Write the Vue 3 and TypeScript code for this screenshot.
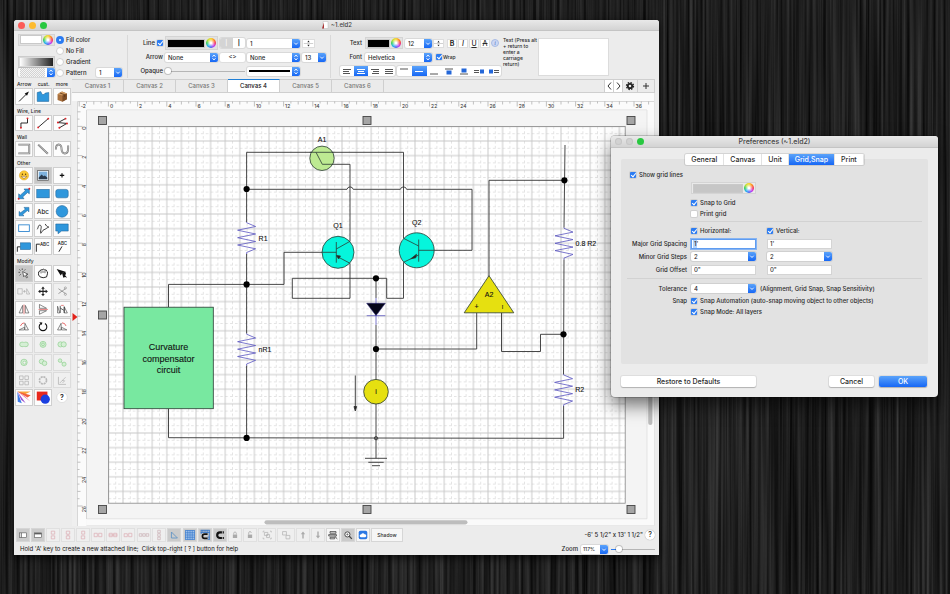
<script setup lang="ts">
import { ref } from 'vue'

interface Tool {
  name: string
  icon: string
  state?: 'on' | 'off' | 'wide'
}
interface Section {
  label: string[]
  kind: string
  tools: Tool[]
}

const BLUE = 'fill="#2f97dc" stroke="#1a5f94" stroke-width=".6"'
const dot = (x: number, y: number) => `<circle cx="${x}" cy="${y}" r="1.1" fill="#e0262b"/>`
const ink = 'fill="none" stroke="#111" stroke-width="1"'
const thin = 'fill="none" stroke="#444" stroke-width=".7"'
const pale = 'fill="none" stroke="#b0b0b0" stroke-width=".8"'
const green = 'fill="#d5efd5" stroke="#93cf93" stroke-width=".8"'
const wall = (d: string) =>
  `<path d="${d}" fill="none" stroke="#777" stroke-width="2.2"/><path d="${d}" fill="none" stroke="#d0d0d0" stroke-width=".9"/>`

const sections: Section[] = [
  {
    label: ['Arrow', 'cust.', 'more'],
    kind: 'first',
    tools: [
      { name: 'Arrow', icon: `<path d="M3.500 13.500 12 5" ${ink}/><path d="M14.500 2.500 9.800 4.600 12.400 7.200z" fill="#111"/>` },
      { name: 'Custom shape', icon: `<path d="M2.500 3.500 6.500 2.500Q8.500 8.500 11.500 4.200L15.500 3.500V13.500H2.500z" ${BLUE}/>` },
      { name: 'More shapes', icon: '<path d="M4 5.500 9 2.500 14.500 4.500V11L9.500 14 4 12z" fill="#a9703d"/><path d="M4 5.500 9 2.500 14.500 4.500 9.500 7z" fill="#d09a62"/><path d="M9.500 7 14.500 4.500V11L9.500 14z" fill="#7c4c26"/><path d="M6.500 4 12 6V8.500" fill="none" stroke="#5c3517" stroke-width=".9"/>' }
    ]
  },
  {
    label: ['Wire, Line'],
    kind: 'single',
    tools: [
      { name: 'Wire', icon: `<path d="M5.500 13.500V8H13V3" ${ink}/>${dot(5.5, 13.5)}${dot(13, 2.7)}` },
      { name: 'Line', icon: `<path d="M3.500 13 15 3" ${ink}/>${dot(3.5, 13)}${dot(15, 3)}` },
      { name: 'Polyline', icon: `<path d="M13 3 4.500 7.500 14.500 8.500 6 13.500" ${ink}/>${dot(13, 3)}${dot(4.3, 7.5)}${dot(14.7, 8.5)}${dot(6, 13.4)}` }
    ]
  },
  {
    label: ['Wall'],
    kind: 'single',
    tools: [
      { name: 'Wall', icon: wall('M2.500 3H15V13H2.500') },
      { name: 'Straight wall', icon: wall('M3.500 3 14.500 13.500') },
      { name: 'Curved wall', icon: wall('M2 8.500C2 1 8.500 1 8.500 8S16 15 16 7.500V4') }
    ]
  },
  {
    label: ['Other'],
    kind: 'other',
    tools: [
      { name: 'Emoji', icon: '<circle cx="9" cy="8" r="5.200" fill="#fbc934" stroke="#d99a1c" stroke-width=".5"/><circle cx="7.200" cy="6.800" r=".8" fill="#5a3a0a"/><circle cx="10.800" cy="6.800" r=".8" fill="#5a3a0a"/><path d="M5.800 9Q9 13.500 12.200 9z" fill="#fff" stroke="#7a4c10" stroke-width=".6"/>' },
      { name: 'Picture', state: 'on', icon: '<rect x="3" y="2.500" width="12" height="11" fill="#fff" stroke="#555" stroke-width=".8"/><rect x="4.200" y="3.700" width="9.600" height="8.600" fill="#7db1dd"/><path d="M4.200 10.500 7.500 7 9.500 9 11 8 13.800 10.500V12.300H4.200z" fill="#2a3a4c"/>' },
      { name: 'Point', icon: '<path d="M9 5.500V10.500M6.500 8H11.500" stroke="#111" stroke-width="1.300"/>' },
      { name: 'Two-point block arrow', icon: `<path d="M3 14V8.500L4.800 10 10.500 5 9 3H15V8.500L13 7 7.500 12 9 14z" ${BLUE}/>${dot(3, 14)}${dot(15, 2.7)}` },
      { name: 'Rectangle', icon: `<rect x="2" y="3.500" width="14" height="9.500" ${BLUE}/>` },
      { name: 'Rounded rectangle', icon: `<rect x="2" y="3.500" width="14" height="9.500" rx="2.500" ${BLUE}/>` },
      { name: 'Block arrow', icon: `<path d="M3.500 13V8L5.200 9.500 10.500 5.500 9 3.500H14.500V8.500L12.800 7 7.500 11.500 9 13z" ${BLUE}/>` },
      { name: 'Text', icon: '<text x="9" y="10.500" font-size="7" text-anchor="middle" fill="#222" font-family="Inter, sans-serif">Abc</text>' },
      { name: 'Circle', icon: `<circle cx="9" cy="8" r="6.600" ${BLUE}/>` },
      { name: 'Frame', icon: '<rect x="3" y="4" width="12" height="7.500" fill="#fff" stroke="#2f86cf" stroke-width="1"/>' },
      { name: 'Freehand', icon: '<path d="M2.500 9C4 7 3.500 3.500 6 4.500S5.500 10 6.500 13.500C8 12 8.500 10 10 9.500 12 9 13 7.500 15.500 6.500 13.500 6 12.500 5 11.500 3" fill="none" stroke="#111" stroke-width=".9"/>' },
      { name: 'Speech bubble', icon: `<path d="M2 3H16V11H8.500L4.500 14V11H2z" ${BLUE}/>` },
      { name: 'Callout', icon: `<path d="M1.500 14V8.500H5" ${ink}/><rect x="5" y="4" width="11.500" height="7.500" ${BLUE}/>` },
      { name: 'Text callout', icon: `<path d="M1.500 14V5.500H5.500" ${ink}/><text x="5.500" y="7" font-size="5" fill="#111" font-family="Inter, sans-serif">ABC</text>` },
      { name: 'Slanted text callout', icon: `<path d="M5.500 14 9 8" ${ink}/><text x="9.500" y="6" font-size="5" text-anchor="middle" fill="#111" font-family="Inter, sans-serif">ABC</text>` }
    ]
  },
  {
    label: ['Modify'],
    kind: 'modify',
    tools: [
      { name: 'Select', state: 'on', icon: '<path d="M7.500 6 13.500 9 11.300 9.700 13 12.500 11.800 13 10.200 10.300 8.700 11.800z" fill="#fff" stroke="#222" stroke-width=".7"/><path d="M7 2.500V4.200M3.800 3.500 5 4.800M10.500 3.500 9.300 4.800M2.800 6.800H4.600M4 10.300 5.300 9" stroke="#222" stroke-width=".8"/>' },
      { name: 'Pan', icon: '<path d="M4 8.500Q3.500 5.500 5.500 5.500 6 3.500 8 4 10 2.500 11 4.200 13 3.500 13 5.500 14.500 5.500 14 8.500L13 12Q9 13.800 5.800 12L4 9.800z" fill="#fff" stroke="#111" stroke-width="1"/><path d="M6.800 5.500V8M9 5V7.500M11.200 5.300V7.800" stroke="#111" stroke-width=".7"/>' },
      { name: 'Direct select', icon: '<path d="M3 3 12 6 9.500 7.500 7.500 10.500z" fill="#111"/><path d="M9 7.500 12.500 5.500 13.500 8.500 12.500 10 14.800 13 12.500 12 10.500 12.800z" fill="#111"/>' },
      { name: 'Replace', state: 'off', icon: `<path d="M2 5H7V11H2zM12 11V5L15.500 11z" ${pale}/><path d="M8 8H11M9.500 6.500V9.500" ${pale}/>` },
      { name: 'Move', icon: '<path d="M9 2.500 11 5H9.600V7.400H12V6L14.500 8 12 10V8.600H9.600V11H11L9 13.500 7 11H8.400V8.600H6V10L3.500 8 6 6V7.400H8.400V5H7z" fill="#222"/>' },
      { name: 'Cut', state: 'off', icon: '<path d="M5 5 13 10.500M5 10.500 13 5" stroke="#8c8c8c" stroke-width=".9"/><circle cx="12.800" cy="4.200" r="1.200" fill="none" stroke="#8c8c8c" stroke-width=".7"/><circle cx="12.800" cy="11.300" r="1.200" fill="none" stroke="#8c8c8c" stroke-width=".7"/>' },
      { name: 'Flip horizontal', icon: `<path d="M7.500 3.500V12H3.500zM10.500 3.500V12H14.500z" ${thin}/><path d="M9 2.500V13.500" stroke="#d55" stroke-width=".8"/>` },
      { name: 'Flip vertical', icon: `<path d="M5 2.500V6.800H13zM5 13.500V9.500H13z" ${thin}/><path d="M4 8.100H14.500" stroke="#d55" stroke-width=".8"/>` },
      { name: 'Mirror to', icon: `<path d="M6.500 12H4V4.500zM11.500 12H15L11.500 5z" ${thin}/><path d="M7 4V12M11.500 5V12M7 6.500 11 9" stroke="#222" stroke-width=".8"/><path d="M8 3.500H11" stroke="#d55" stroke-width=".8"/>` },
      { name: 'Rotate left', icon: `<path d="M3.500 12H9.500V9zM10 12V4.500L14 12z" ${thin}/><path d="M5 7.500Q6.500 4 9.500 4" fill="none" stroke="#d33" stroke-width=".8"/>` },
      { name: 'Rotate', icon: '<path d="M6.800 4.800A4.300 4.300 0 1 0 11.200 4.800" fill="none" stroke="#111" stroke-width="1.200"/><path d="M4.800 3.300 8.300 3.500 7.500 6.500z" fill="#111"/>' },
      { name: 'Rotate right', icon: `<path d="M14.500 12H8.500V9zM8 12V4.500L4 12z" ${thin}/><path d="M9 4Q12.500 4 13.500 7.500" fill="none" stroke="#d33" stroke-width=".8"/>` },
      { name: 'Union', state: 'off', icon: `<path d="M6.800 5.400A2.600 2.600 0 1 0 6.800 10.600Q9 10.600 9 9.800 9 10.600 11.200 10.600A2.600 2.600 0 1 0 11.200 5.400Q9 5.400 9 6.200 9 5.400 6.800 5.400z" ${green}/>` },
      { name: 'Intersect', state: 'off', icon: `<circle cx="9" cy="8" r="3.400" ${green}/><circle cx="9" cy="8" r="1.600" ${green}/>` },
      { name: 'Combine', state: 'off', icon: `<circle cx="7.300" cy="8" r="2.900" ${green}/><circle cx="10.900" cy="8" r="2.900" ${green}/>` },
      { name: 'Subtract', state: 'off', icon: `<circle cx="9" cy="8" r="3.600" ${green}/><circle cx="9.500" cy="8.300" r="1.700" fill="#f3f3f3" stroke="#93cf93" stroke-width=".7"/>` },
      { name: 'Exclude', state: 'off', icon: `<circle cx="7.400" cy="7" r="2.600" ${green}/><circle cx="10.700" cy="9" r="2.600" ${green}/>` },
      { name: 'Divide', state: 'off', icon: `<circle cx="6.800" cy="6" r="2" ${green}/><circle cx="11.300" cy="10" r="2.300" ${green}/><path d="M8 7.500 9.800 8.800" ${green}/>` },
      { name: 'Array', state: 'off', icon: `<path d="M4 3H8V7H4zM10 3H14V7H10zM4 9H8V13H4zM10 9H14V13H10z" ${pale}/>` },
      { name: 'Circular array', state: 'off', icon: '<circle cx="9" cy="8" r="4" fill="none" stroke="#b8b8b8" stroke-width="1.800" stroke-dasharray="2.300 .840"/>' },
      { name: 'Edit path', state: 'off', icon: `<path d="M5 4V12.500H13.500M6.500 11 13 4.500M9 8 12 8.500 9.500 11" ${pale}/>` },
      { name: 'Color burst', icon: '<path d="M1.500 1.500H16.500L9 5z" fill="#f9a53b"/><path d="M1.500 1.500 16.500 13 10 7z" fill="#e94b8b"/><path d="M1.500 1.500 11 14.500 6 11z" fill="#9b4fd0"/><path d="M1.500 1.500 6.500 14.500 2 13z" fill="#3d7be8"/><path d="M1.500 1.500 16.500 5.500 13 8z" fill="#f2603a"/>' },
      { name: 'Overlap color', icon: '<rect x="2" y="1.500" width="12" height="10" fill="#e8281e"/><circle cx="11.500" cy="10" r="5.200" fill="#1b3fe0"/>' },
      { name: 'Help', state: 'wide', icon: '<circle cx="9" cy="8" r="5.200" fill="#fff" stroke="#ccc" stroke-width=".5"/><text x="9" y="10.600" font-size="7" font-weight="600" text-anchor="middle" fill="#222" font-family="Inter, sans-serif">?</text>' }
    ]
  }
]

const pink = 'fill="none" stroke="#dcaab2" stroke-width=".8"'
const lock = (d: string) =>
  `<rect x="4.500" y="6.500" width="5" height="4" fill="#aaa"/><path d="${d}" fill="none" stroke="#aaa" stroke-width=".9"/>`
const bottomGroups: Tool[][] = [
  [
    { name: 'Left panel', state: 'on', icon: '<rect x="3" y="4.500" width="8" height="5.500" fill="#fff" stroke="#555" stroke-width=".7"/><path d="M5 4.500V10" stroke="#555"/>' },
    { name: 'Top panel', state: 'on', icon: '<rect x="3" y="4.500" width="8" height="5.500" fill="#fff" stroke="#555" stroke-width=".7"/><path d="M3 5.500H11" stroke="#555" stroke-width="1.500"/>' }
  ],
  [
    { name: 'Align left', state: 'off', icon: `<path d="M5 2.500H9V6H5zM5 8H9V11.500H5z" ${pink}/>` },
    { name: 'Align centre', state: 'off', icon: `<path d="M5 2.500H9V6H5zM5 8H9V11.500H5zM7 6V8" ${pink}/>` },
    { name: 'Align right', state: 'off', icon: `<path d="M5.500 2.500H9V6H5.500zM5 8H9V11.500H5z" ${pink}/>` }
  ],
  [
    { name: 'Align top', state: 'off', icon: `<path d="M2.500 5H6.200V9H2.500zM7.800 5H11.500V9H7.800z" ${pink}/>` },
    { name: 'Align middle', state: 'off', icon: `<path d="M2.500 5H6.200V9H2.500zM7.800 5H11.500V9H7.800zM2 7H12" ${pink}/>` },
    { name: 'Align bottom', state: 'off', icon: `<path d="M2.500 5.500H6.200V9H2.500zM7.800 5H11.500V9H7.800z" ${pink}/>` }
  ],
  [
    { name: 'Distribute across', state: 'off', icon: `<path d="M1.500 5.500H4.500V8.500H1.500zM5.500 5.500H8.500V8.500H5.500zM9.500 5.500H12.500V8.500H9.500z" fill="none" stroke="#c9b0b4" stroke-width=".8"/>` },
    { name: 'Distribute down', state: 'off', icon: `<path d="M5.500 1.500H8.500V4.500H5.500zM5.500 5.500H8.500V8.500H5.500zM5.500 9.500H8.500V12.500H5.500z" fill="none" stroke="#c9b0b4" stroke-width=".8"/>` },
    { name: 'Angle', state: 'on', icon: '<path d="M4 3.500V10.500H11z" fill="none" stroke="#5f93c4" stroke-width="1"/>' }
  ],
  [
    { name: 'Grid', state: 'on', icon: '<rect x="1.500" y="1.500" width="11" height="11" fill="#dbeafc"/><path d="M1.500 2H12.500M1.500 4.500H12.500M1.500 7H12.500M1.500 9.500H12.500M1.500 12H12.500M2 1.500V12.500M4.500 1.500V12.500M7 1.500V12.500M9.500 1.500V12.500M12 1.500V12.500" stroke="#2f74c9" stroke-width="1"/>' },
    { name: 'Snap to grid', state: 'on', icon: '<path d="M2 1.500H12.500M2 4H12.500M12 1.500V12.500M9.500 1.500V5M7 1.500V4M4.500 1.500V4M2.500 1.500V6M10 9.500H12.500M10 12H12.500" stroke="#2f74c9" stroke-width="1"/><path d="M10 6H6.500A2.500 2.500 0 0 0 6.500 11H10" fill="none" stroke="#111" stroke-width="2"/>' },
    { name: 'Magnet', state: 'on', icon: '<path d="M11.500 4H7A3 3 0 0 0 7 10.500H11.500" fill="none" stroke="#111" stroke-width="2.600"/><path d="M9.800 2.500V5.500M9.800 9V12" stroke="#fff" stroke-width=".7"/>' }
  ],
  [
    { name: 'Lock', state: 'off', icon: lock('M5.500 6.500V5A1.500 1.500 0 0 1 8.500 5V6.500') },
    { name: 'Unlock', state: 'off', icon: lock('M5.500 6.500V4.500A1.500 1.500 0 0 1 8.500 4.500') },
    { name: 'Group', state: 'wide', icon: `<path d="M4 4H8V7.500H4zM6.500 6.500H10V10H6.500zM2.500 2.500H4M10.500 2.500H12M2.500 11.500H4M10.500 11.500H12M2.500 2.500V4M12 2.500V4M2.500 10V11.500M12 10V11.500" ${pale}/>` },
    { name: 'Ungroup', state: 'wide', icon: `<path d="M3 3H7.500V7H3zM7 7.500H11.500V11.500H7z" ${pale}/>` },
    { name: 'Bring forward', state: 'off', icon: '<path d="M7 3 9.500 6H7.800V11H6.200V6H4.500z" fill="#aaa"/>' },
    { name: 'Send backward', state: 'off', icon: '<path d="M7 11 9.500 8H7.800V3H6.200V8H4.500z" fill="#aaa"/>' },
    { name: 'Properties', icon: '<path d="M3.500 3H10.500V5H3.500zM2 6.500H11V8.200H2zM3.500 9.700H9V11.500H3.500z" fill="#ddd" stroke="#333" stroke-width=".8"/><path d="M9 8.500 12 11.500" stroke="#333"/>' }
  ],
  [{ name: 'Zoom in', state: 'on', icon: '<circle cx="6.300" cy="6.300" r="3" fill="#fff" stroke="#444" stroke-width="1.100"/><path d="M8.500 8.500 11.500 11.500" stroke="#444" stroke-width="1.500"/><path d="M5 6.300H7.600M6.300 5V7.600" stroke="#444" stroke-width=".7"/>' }],
  [{ name: 'Cloud', icon: '<rect x="2" y="2" width="10" height="10" rx="2" fill="#2b78e4"/><path d="M4.500 9.500A1.500 1.500 0 0 1 4.700 6.500 2.300 2.300 0 0 1 8.900 6 1.800 1.800 0 0 1 9.600 9.500z" fill="#fff"/>' }]
]

const fills = ['Fill color', 'No Fill', 'Gradient', 'Pattern']
const fill = ref('Fill color')
const canvases = [1, 2, 3, 4, 5, 6]
const current = ref(4)
const prefTabs = ['General', 'Canvas', 'Unit', 'Grid,Snap', 'Print']
const prefTab = ref('Grid,Snap')
const patternNo = ref('1')
const lineWidth = ref('1')
const arrowSize = ref('13')
const fontSize = ref('12')
const zoomLevel = ref('117%')

/* Ruler and page geometry, in drawing units */
const unit = 14.6
const origin = { x: 108.4, y: 126.4 }
const rulerX = Array.from({ length: 79 }, (_, i) => i / 2 - 2).map((v) => ({ v, at: origin.x + v * unit }))
const rulerY = Array.from({ length: 55 }, (_, i) => i / 2 - 1).map((v) => ({ v, at: origin.y + v * unit }))
const tick = (v: number) => (v % 2 === 0 ? 5 : Number.isInteger(v) ? 3 : 2)
const handles = [
  [102.5, 120.5], [367, 120.5], [631, 120.5],
  [102.5, 315], [102.5, 509.5], [367, 509.5], [631, 509.5]
]
const resistors = [[246.6, 222], [246.6, 333.5], [564, 227.6], [563.6, 374.2]]
const nodes = [
  [246.6, 189], [246.6, 284.4], [246.6, 437.9], [376, 278.3], [376, 349], [564.4, 180.3], [563.5, 334.3]
]
</script>

<template>
  <div class="desktop">
    <svg class="wood" aria-hidden="true">
      <filter id="grain" x="0" y="0" width="100%" height="100%" color-interpolation-filters="sRGB">
        <feTurbulence type="fractalNoise" baseFrequency="0.3 0.003" numOctaves="3" seed="8" />
        <feColorMatrix values=".3 0 0 0 -.03  .3 0 0 0 -.03  .3 0 0 0 -.03  0 0 0 0 1" />
      </filter>
      <rect width="100%" height="100%" filter="url(#grain)" />
    </svg>

    <main class="window editor">
      <header class="titlebar">
        <span class="lights"><i class="red"></i><i class="amber"></i><i class="green"></i></span>
        <h1>
          <svg width="8" height="8" viewBox="0 0 8 8"><path d="M2 .5H7V7.500H2z" fill="#fff" stroke="#bbb" stroke-width=".5" /><path d="M1 7.500 3 1.500V7.500z" fill="#a33" /></svg>
          ~1.eld2
        </h1>
      </header>

      <div class="toolbar">
        <div class="fill-group">
          <div class="well-row"><button class="well white" aria-label="Fill color"></button><button class="wheel" aria-label="Color picker"></button></div>
          <button class="well gradient" aria-label="Gradient colors"></button>
          <div class="combo pattern-box"><select aria-label="Pattern style"><option></option></select><svg class="cap" viewBox="0 0 8 9"><path d="M2.500 3.800 4 2 5.500 3.800M2.500 5.200 4 7 5.500 5.200" /></svg></div>
          <label v-for="f in fills" :key="f" class="radio"><input v-model="fill" type="radio" name="fill" :value="f" />{{ f }}</label>
          <div class="combo pattern-no"><select v-model="patternNo" aria-label="Pattern number"><option>1</option></select><svg class="cap" viewBox="0 0 8 9"><path d="M2.300 3.700 4 5.500 5.700 3.700" /></svg></div>
        </div>

        <div class="line-group">
          <label class="check end">Line <input type="checkbox" checked /></label>
          <div class="well-row"><button class="well black" aria-label="Line color"></button><button class="wheel" aria-label="Line color picker"></button></div>
          <div class="seg two"><button class="dim" aria-label="Thin">|</button><button aria-label="Thick"><b>|</b></button></div>
          <div class="combo"><select v-model="lineWidth" aria-label="Line width"><option>1</option></select><svg class="cap" viewBox="0 0 8 9"><path d="M2.300 3.700 4 5.500 5.700 3.700" /></svg></div>
          <button class="stepper" aria-label="Step line width"><svg viewBox="0 0 12 9"><path d="M6 .8 7.500 3H4.500zM6 8.200 7.500 6H4.500z" fill="#222" /><path d="M0 4.500H12" stroke="#999" stroke-width=".6" /></svg></button>

          <label class="end" for="arrow">Arrow</label>
          <div class="combo"><select id="arrow"><option>None</option></select><svg class="cap" viewBox="0 0 8 9"><path d="M2.500 3.800 4 2 5.500 3.800M2.500 5.200 4 7 5.500 5.200" /></svg></div>
          <button class="plain">&lt;&gt;</button>
          <div class="combo"><select aria-label="End arrow"><option>None</option></select><svg class="cap" viewBox="0 0 8 9"><path d="M2.500 3.800 4 2 5.500 3.800M2.500 5.200 4 7 5.500 5.200" /></svg></div>
          <div class="combo"><select v-model="arrowSize" aria-label="Arrow size"><option>13</option></select><svg class="cap" viewBox="0 0 8 9"><path d="M2.300 3.700 4 5.500 5.700 3.700" /></svg></div>

          <label class="end" for="opaque">Opaque</label>
          <input id="opaque" class="slider opaque" type="range" value="0" />
          <div class="combo stroke-box"><select aria-label="Line style"><option></option></select><svg class="cap" viewBox="0 0 8 9"><path d="M2.500 3.800 4 2 5.500 3.800M2.500 5.200 4 7 5.500 5.200" /></svg></div>
        </div>

        <div class="text-group">
          <div class="row">
            <span class="tag">Text</span>
            <div class="well-row text-well"><button class="well black" aria-label="Text color"></button><button class="wheel" aria-label="Text color picker"></button></div>
            <div class="combo size"><select v-model="fontSize" aria-label="Font size"><option>12</option></select><svg class="cap" viewBox="0 0 8 9"><path d="M2.300 3.700 4 5.500 5.700 3.700" /></svg></div>
            <button class="stepper narrow" aria-label="Step font size"><svg viewBox="0 0 12 9"><path d="M6 .8 7.500 3H4.500zM6 8.200 7.500 6H4.500z" fill="#222" /><path d="M0 4.500H12" stroke="#999" stroke-width=".6" /></svg></button>
            <div class="style-set"><button><b>B</b></button><button><em>I</em></button><button><u>U</u></button><button><s>A</s></button><button class="info" aria-label="Info"><span>i</span></button></div>
          </div>
          <div class="row">
            <label class="tag" for="font">Font</label>
            <div class="combo font"><select id="font"><option>Helvetica</option></select><svg class="cap" viewBox="0 0 8 9"><path d="M2.500 3.800 4 2 5.500 3.800M2.500 5.200 4 7 5.500 5.200" /></svg></div>
            <label class="check wrap"><input type="checkbox" checked />Wrap</label>
          </div>
          <div class="row aligns">
            <div class="seg four">
              <button aria-label="Align text left"><svg viewBox="0 0 14 9"><path d="M3 2.500H11M3 4.500H9M3 6.500H10" /></svg></button>
              <button class="on" aria-label="Align text centre"><svg viewBox="0 0 14 9"><path d="M3 2.500H11M4 4.500H10M3 6.500H11" /></svg></button>
              <button aria-label="Align text right"><svg viewBox="0 0 14 9"><path d="M3 2.500H11M5 4.500H11M4 6.500H11" /></svg></button>
              <button aria-label="Justify"><svg viewBox="0 0 14 9"><path d="M3 2.500H11M3 4.500H11M3 6.500H11" /></svg></button>
            </div>
            <div class="seg seven">
              <button aria-label="Text at top"><svg viewBox="0 0 14 9"><path d="M3 2H11" /></svg></button>
              <button class="on" aria-label="Text in middle"><svg viewBox="0 0 14 9"><path d="M3 4.500H11" /></svg></button>
              <button aria-label="Text at bottom"><svg viewBox="0 0 14 9"><path d="M3 7H11" /></svg></button>
              <button aria-label="Text below"><svg viewBox="0 0 14 9"><path d="M3 2H11" /><path d="M4.500 3.500H9.500V7.500H4.500z" class="b" /></svg></button>
              <button aria-label="Text above"><svg viewBox="0 0 14 9"><path d="M3 7H11" /><path d="M4.500 1.500H9.500V5.500H4.500z" class="b" /></svg></button>
              <button aria-label="Text left"><svg viewBox="0 0 14 9"><path d="M2 3.500H7M2 5.500H7" /><path d="M8 2.500H12V6.500H8z" class="b" /></svg></button>
              <button aria-label="Text right"><svg viewBox="0 0 14 9"><path d="M7 3.500H12M7 5.500H12" /><path d="M2 2.500H6V6.500H2z" class="b" /></svg></button>
            </div>
          </div>
        </div>
        <label class="note" for="caption">Text (Press alt + return to enter a carriage return)</label>
        <textarea id="caption" class="caption"></textarea>
      </div>

      <div class="body">
        <aside class="palette">
          <section v-for="s in sections" :key="s.label[0]" :class="s.kind">
            <h2><span v-for="l in s.label" :key="l">{{ l }}</span></h2>
            <div class="cells">
              <button v-for="t in s.tools" :key="t.name" :class="['cell', t.state]" :aria-label="t.name">
                <svg viewBox="0 0 18 16" v-html="t.icon"></svg>
              </button>
            </div>
          </section>
        </aside>

        <div class="stage">
          <nav class="tabs">
            <button v-for="n in canvases" :key="n" :class="{ active: n === current }" @click="current = n">Canvas {{ n }}</button>
            <span class="spacer"></span>
            <button class="nav" aria-label="Previous"><svg viewBox="0 0 9 12"><path d="M6 2.500 3 6 6 9.500" /></svg></button>
            <button class="nav" aria-label="Next"><svg viewBox="0 0 9 12"><path d="M3 2.500 6 6 3 9.500" /></svg></button>
            <button class="act" aria-label="Settings"><svg viewBox="0 0 12 12"><circle cx="6" cy="6" r="2.200" fill="none" stroke="#222" stroke-width="1.800" /><circle cx="6" cy="6" r="3.500" fill="none" stroke="#222" stroke-width="1.300" stroke-dasharray="1.500 1.250" /></svg></button>
            <button class="act add" aria-label="Add canvas"><svg viewBox="0 0 12 12"><path d="M6 3V9M3 6H9" /></svg></button>
          </nav>

          <div class="viewport">
            <svg class="drawing" width="583" height="433" viewBox="72 93 583 433">
              <defs>
                <pattern id="grid" :x="origin.x" :y="origin.y" :width="unit" :height="unit" patternUnits="userSpaceOnUse">
                  <path d="M0 7.300H14.600M7.300 0V14.600" stroke="#dedede" stroke-width=".8" stroke-dasharray="2.600 2.270" fill="none" />
                  <path d="M0 0H14.600M0 0V14.600M0 14.600H14.600M14.600 0V14.600" stroke="#c4c4c4" stroke-width=".9" fill="none" />
                </pattern>
                <g id="resistor"><path d="M0 0V.700L9 4.500-9 8.200 9 12-9 15.700 9 19.500-9 23 9 26.800 0 30.500V32" fill="none" stroke="#5a55c0" stroke-width=".8" /></g>
              </defs>
              <rect x="72" y="93" width="583" height="433" fill="#f4f4f4" />
              <rect x="72" y="93" width="583" height="8" fill="#fafafa" />
              <rect x="72" y="101" width="5.500" height="425" fill="#efefef" />
              <g class="ruler">
                <rect x="77.500" y="101" width="577" height="9" fill="#fbfbfb" />
                <rect x="77.500" y="101" width="9" height="425" fill="#fbfbfb" />
                <path d="M77.500 101.500H654M77.500 101.500V526M86.500 110V519" stroke="#c8c8c8" stroke-width=".7" fill="none" />
                <path d="M86.500 109.800H647" stroke="#dcdcdc" stroke-width=".7" />
                <template v-for="t in rulerX" :key="'x' + t.v">
                  <path v-if="t.at > 78 && t.at < 650" :d="`M${t.at} 101.500v${tick(t.v)}`" stroke="#999" stroke-width=".6" />
                  <text v-if="t.v % 2 === 0" :x="t.at + 1.5" y="108">{{ t.v }}</text>
                </template>
                <template v-for="t in rulerY" :key="'y' + t.v">
                  <path v-if="t.at < 519" :d="`M77.500 ${t.at}h${tick(t.v)}`" stroke="#999" stroke-width=".6" />
                  <text v-if="t.v % 2 === 0 && t.at < 519" :transform="`translate(85.5 ${t.at}) rotate(-90)`" text-anchor="end">{{ t.v }}</text>
                </template>
              </g>
              <path d="M72.500 313 77.500 317 72.500 321z" fill="#e2231a" />

              <rect x="108.400" y="126.400" width="516.800" height="376.800" fill="#fff" />
              <rect x="108.400" y="126.400" width="516.800" height="376.800" fill="url(#grid)" stroke="#888" stroke-width=".8" />

              <g class="wires">
                <path d="M403.500 238.300V152.300H246.600V222" />
                <path d="M316 152.300 322.300 164.300H350V241.300" />
                <path d="M246.600 189.300H347A3.200 3.200 0 0 1 353.200 189.300H400.400A3.200 3.200 0 0 1 406.600 189.300H472V250.300H419" />
                <path d="M246.600 254V333.500M246.600 365.500V438" />
                <path d="M168.500 307V284.400H284V252.300H336" />
                <path d="M350 263.300V298.300H292.300V278.300H386.700V298.300H403.500V262.300" />
                <path d="M376 278.300V298M376 325V458.300" />
                <path d="M168.500 408.500V437.700L563.600 438.300V406" />
                <path d="M376 349H476.700V312.700M501.500 312.700V351.500H540.500V334.300H563.500" />
                <path d="M489 276V180.300H564.500M565 145 564 227.600M564 259.500 563.500 374.500" />
                <path d="M365 458.300H387M368.300 462.300H383.700M372 465.700H380M355.300 375.500V407" />
                <path d="M354 406.500H356.600L355.300 411z" class="head" />
              </g>
              <path d="M376 298V325M366.700 315.700H385.300" stroke="#5a55c0" stroke-width=".8" />
              <path d="M366.700 303.300H385.300L376 315.500z" fill="#050518" stroke="#26226e" stroke-width=".6" />
              <use v-for="r in resistors" :key="r.join()" href="#resistor" :x="r[0]" :y="r[1]" />

              <g class="parts">
                <circle cx="322" cy="158.300" r="12.200" fill="#bdea92" />
                <path d="M309.800 152.300H333.500M316 152.300 322.300 164.300H333" fill="none" />
                <circle cx="338" cy="252.300" r="16" fill="#06f5dc" />
                <path d="M322 252.300H336.300M336.300 242V262.700M336.300 249 350 241.300M336.300 256 350 263.300" fill="none" />
                <path d="M336.600 255.500 340.500 256 338.600 259z" fill="#222" />
                <circle cx="416.700" cy="250.300" r="17.500" fill="#06f5dc" />
                <path d="M434.200 250.300H418.700M418.700 239.500V261.700M418.700 246 403.500 238.300M418.700 255 403.500 262.300" fill="none" />
                <path d="M410.800 258.800 416.500 254.200 415.800 257.800z" fill="#222" />
                <circle cx="376" cy="391.700" r="12.300" fill="#e6e010" />
                <path d="M489 275.700 513.800 312.800H464.200z" fill="#e6e010" />
                <rect x="124" y="307.200" width="89.300" height="101.500" fill="#78e8a0" />
              </g>
              <circle v-for="n in nodes" :key="n.join()" :cx="n[0]" :cy="n[1]" r="3.100" fill="#000" />
              <circle cx="376" cy="438.200" r="1.700" fill="#666" stroke="#222" stroke-width=".6" />

              <g class="labels">
                <text x="322" y="141.500" class="mid">A1</text>
                <text x="338" y="228" class="mid">Q1</text>
                <text x="416.700" y="224.500" class="mid">Q2</text>
                <text x="258.600" y="240.500">R1</text>
                <text x="258.600" y="351.800">nR1</text>
                <text x="575.600" y="246.300">0.8 R2</text>
                <text x="575.300" y="392.200">R2</text>
                <text x="489" y="297.200" class="mid">A2</text>
                <text x="476.500" y="309" class="mid">+</text>
                <text x="376" y="394.200" class="mid">i</text>
                <text transform="translate(503.500 307) rotate(-90)" class="mid">–</text>
                <g class="big"><text x="168.500" y="349.800">Curvature</text><text x="168.500" y="361.500">compensator</text><text x="168.500" y="373">circuit</text></g>
              </g>
              <rect v-for="h in handles" :key="h.join()" :x="h[0] - 4" :y="h[1] - 4" width="8" height="8" fill="#a5a5a5" stroke="#444" stroke-width=".9" />

              <rect x="647" y="110" width="8" height="416" fill="#fafafa" />
              <rect x="86.800" y="519" width="568" height="7" fill="#fafafa" />
              <path d="M86.800 518.800H647V110M654.500 93V525.700H86.500" fill="none" stroke="#d6d6d6" stroke-width=".6" />
              <rect x="264.500" y="520.200" width="203" height="4.200" rx="2.100" fill="#bdbdbd" />
              <rect x="648.200" y="230" width="4.200" height="195" rx="2.100" fill="#bdbdbd" />
            </svg>
          </div>
        </div>
      </div>

      <footer>
        <div class="bottom-tools">
          <div v-for="(g, i) in bottomGroups" :key="i" class="set">
            <button v-for="t in g" :key="t.name" :class="['tool', t.state]" :aria-label="t.name"><svg viewBox="0 0 14 14" v-html="t.icon"></svg></button>
          </div>
          <button class="tool shadow">Shadow</button>
          <span class="coords">-6' 5 1/2" x 13' 1 1/2"</span>
          <button class="help">?</button>
        </div>
        <div class="status">
          <span class="hint">Hold 'A' key to create a new attached line;&nbsp; Click top-right [ ? ] button for help</span>
          <label for="zoom">Zoom</label>
          <div class="combo zoom"><select id="zoom" v-model="zoomLevel"><option>117%</option></select><svg class="cap" viewBox="0 0 8 9"><path d="M2.300 3.700 4 5.500 5.700 3.700" /></svg></div>
          <input class="slider zoomer" type="range" value="14" aria-label="Zoom level" />
        </div>
      </footer>
    </main>

    <form class="window prefs" @submit.prevent>
      <header class="titlebar">
        <span class="lights"><i></i><i></i><i class="green"></i></span>
        <h1>Preferences (~1.eld2)</h1>
      </header>
      <nav class="pref-tabs">
        <button v-for="p in prefTabs" :key="p" type="button" :class="{ on: p === prefTab }" @click="prefTab = p">{{ p }}</button>
      </nav>
      <div class="panel">
        <label class="check show"><input type="checkbox" checked />Show grid lines</label>
        <div class="well-row grid-color"><button type="button" class="well grey" aria-label="Grid color"></button><button type="button" class="wheel" aria-label="Grid color picker"></button></div>
        <label class="check indent"><input type="checkbox" checked />Snap to Grid</label>
        <label class="check indent"><input type="checkbox" />Print grid</label>
        <hr class="indent" />
        <div class="form spacing">
          <span></span>
          <label class="check"><input type="checkbox" checked />Horizontal:</label>
          <label class="check"><input type="checkbox" checked />Vertical:</label>

          <label for="major">Major Grid Spacing</label>
          <div class="field focus"><input id="major" type="text" value="1'" /></div>
          <div class="field"><input type="text" value="1'" aria-label="Vertical major grid spacing" /></div>

          <label for="minor">Minor Grid Steps</label>
          <div class="combo"><select id="minor"><option>2</option></select><svg class="cap" viewBox="0 0 8 9"><path d="M2.300 3.700 4 5.500 5.700 3.700" /></svg></div>
          <div class="combo"><select aria-label="Vertical minor grid steps"><option>2</option></select><svg class="cap" viewBox="0 0 8 9"><path d="M2.300 3.700 4 5.500 5.700 3.700" /></svg></div>

          <label for="offset">Grid Offset</label>
          <div class="field"><input id="offset" type="text" value="0&quot;" /></div>
          <div class="field"><input type="text" value="0&quot;" aria-label="Vertical grid offset" /></div>
        </div>
        <hr />
        <div class="form snap">
          <label class="lead" for="tolerance">Tolerance</label>
          <div class="combo"><select id="tolerance"><option>4</option></select><svg class="cap" viewBox="0 0 8 9"><path d="M2.300 3.700 4 5.500 5.700 3.700" /></svg></div>
          <span>(Alignment, Grid Snap, Snap Sensitivity)</span>
          <span class="lead">Snap</span>
          <label class="check wide"><input type="checkbox" checked />Snap Automation (auto-snap moving object to other objects)</label>
          <span></span>
          <label class="check wide"><input type="checkbox" checked />Snap Mode: All layers</label>
        </div>
      </div>
      <div class="actions">
        <button type="button" class="restore">Restore to Defaults</button>
        <span class="spacer"></span>
        <button type="button" class="cancel">Cancel</button>
        <button type="submit" class="ok">OK</button>
      </div>
    </form>
  </div>
</template>

<style>
body {
  margin: 0;
  background: #1e1e1e;
}
</style>

<style scoped>
* {
  box-sizing: border-box;
}
.desktop {
  position: relative;
  min-height: 100vh;
  overflow: hidden;
  font: 500 6px/8px Inter, 'Liberation Sans', sans-serif;
  color: #2a2a2a;
}
.wood {
  position: absolute;
  inset: 0;
  width: 100%;
  height: 100%;
}
button,
select,
input,
textarea {
  font: inherit;
  color: inherit;
  margin: 0;
  padding: 0;
  border: 0;
  border-radius: 0;
  outline: 0;
  appearance: none;
  background: none;
}
h1,
h2 {
  margin: 0;
  font: inherit;
}
.spacer {
  flex: 1;
}
.window {
  position: absolute;
  display: flex;
  flex-direction: column;
  background: #ececec;
  border-radius: 3px 3px 0 0;
}
.editor {
  inset: 20px 291px 39px 14px;
  box-shadow: 0 3px 10px rgba(0, 0, 0, 0.7);
}
.titlebar {
  display: grid;
  grid-template-columns: 1fr auto 1fr;
  align-items: center;
  height: 11px;
  flex: none;
  border-radius: 3px 3px 0 0;
  background: linear-gradient(#e9e9e9, #d3d3d3);
  border-bottom: 1px solid #c4c4c4;
}
.titlebar h1 {
  display: flex;
  align-items: center;
  gap: 2px;
  color: #444;
}
.lights {
  display: flex;
  gap: 4px;
  padding-left: 4px;
}
.lights i {
  width: 7px;
  height: 7px;
  border-radius: 50%;
  background: #d2d2d2;
  box-shadow: 0 0 0 1px #c6c6c6 inset;
}
.lights .red {
  background: #fc5b57;
  box-shadow: none;
}
.lights .amber {
  background: #fdbb2e;
  box-shadow: none;
}
.lights .green {
  background: #28c840;
  box-shadow: none;
}

.toolbar {
  display: flex;
  height: 48px;
  flex: none;
}
.well-row {
  display: flex;
  align-items: center;
  gap: 1px;
  padding: 1px;
  background: #e2e2e2;
  border: 1px solid #d4d4d4;
}
.well {
  flex: 1;
  height: 9px;
  border: 1px solid #c9c9c9;
}
.well.white {
  background: #fff;
}
.well.black {
  background: #000;
}
.well.grey {
  background: #c6c6c6;
}
.wheel {
  width: 10px;
  height: 10px;
  border-radius: 50%;
  background: radial-gradient(#fff 10%, rgba(255, 255, 255, 0) 60%), conic-gradient(#f7d532, #ff8a1e, #f4355e, #c83df0, #4a62f5, #28b6f0, #33cf5a, #c2e034, #f7d532);
}
.fill-group {
  display: grid;
  grid-template-columns: 37px 39px 26px;
  grid-template-rows: repeat(4, 11px);
  column-gap: 1px;
  align-items: center;
  padding: 3px 5px 0 4px;
}
.fill-group .well-row {
  height: 12px;
}
.fill-group .gradient {
  grid-area: 3 / 1;
  height: 12px;
  background: linear-gradient(90deg, #fff, #222);
  border: 2px solid #dadada;
  outline: 1px solid #ccc;
  outline-offset: -1px;
}
.fill-group .pattern-box {
  grid-area: 4 / 1;
}
.pattern-box select {
  margin: 0 2px;
  background: repeating-conic-gradient(#d2d2d2 0 25%, #f4f4f4 0 50%) 0 0 / 2px 2px;
}
.radio {
  grid-column: 2;
  display: flex;
  align-items: center;
  gap: 2px;
  white-space: nowrap;
}
.radio:nth-of-type(1) {
  grid-row: 1;
}
.radio input {
  width: 8px;
  height: 8px;
  flex: none;
  border-radius: 50%;
  background: #fff;
  border: 1px solid #d0d0d0;
}
.radio input:checked {
  border: 3px solid #2c7cf2;
}
.fill-group .pattern-no {
  grid-area: 4 / 3;
}
.combo {
  display: flex;
  height: 9px;
  min-width: 0;
  background: #fff;
  border-radius: 2px;
  box-shadow: 0 0 0 1px rgba(0, 0, 0, 0.08);
}
.combo select {
  flex: 1;
  min-width: 0;
  padding-left: 3px;
  height: 9px;
  line-height: 9px;
}
.cap {
  width: 8px;
  height: 9px;
  flex: none;
  border-radius: 0 2px 2px 0;
  background: linear-gradient(#5ba3fa, #1667f5);
}
.cap path {
  fill: none;
  stroke: #fff;
  stroke-width: 0.9;
}
.line-group {
  display: grid;
  grid-template-columns: 35px 53px 25px 53px 24px;
  grid-template-rows: repeat(3, 12px);
  gap: 2px;
  align-items: center;
  margin-top: 4px;
  padding: 2px 4px 0 0;
  height: 43px;
  border: solid #d9d9d9;
  border-width: 0 1px;
}
.end {
  display: flex;
  gap: 2px;
  justify-content: flex-end;
  align-items: center;
}
.check {
  display: flex;
  align-items: center;
  gap: 3px;
  white-space: nowrap;
}
.end.check {
  gap: 2px;
}
.check input {
  position: relative;
  width: 6px;
  height: 6px;
  flex: none;
  border-radius: 1px;
  background: #fff;
  box-shadow: 0 0 0 1px rgba(0, 0, 0, 0.08);
}
.check input:checked {
  background: #2c7cf2;
}
.check input:checked::before {
  content: '';
  position: absolute;
  left: 2px;
  top: 0;
  width: 2px;
  height: 4px;
  border: solid #fff;
  border-width: 0 1px 1px 0;
  transform: rotate(40deg);
}
.seg {
  display: flex;
  height: 10px;
  background: #fff;
  border-radius: 2px;
  box-shadow: 0 0 0 1px rgba(0, 0, 0, 0.08);
  overflow: hidden;
}
.seg button {
  flex: 1;
}
.seg svg {
  display: block;
  width: 14px;
  height: 9px;
  margin: auto;
}
.seg path {
  stroke: #555;
  fill: none;
}
.seg .b {
  fill: #2467d8;
  stroke: none;
}
.seg .on {
  background: linear-gradient(#5ba3fa, #1667f5);
}
.seg .on path {
  stroke: #fff;
}
.seg .dim {
  background: #d4d4d4;
  color: #fff;
}
.stepper {
  width: 13px;
  height: 9px;
  background: #fff;
  border: 1px solid #ddd;
}
.stepper svg {
  display: block;
  width: 100%;
  height: 7px;
}
.stepper.narrow {
  width: 11px;
}
.plain {
  height: 9px;
  background: #fff;
  border-radius: 2px;
  box-shadow: 0 0 0 1px rgba(0, 0, 0, 0.06);
}
.slider {
  height: 8px;
  min-width: 0;
  background: linear-gradient(#b5b5b5, #b5b5b5) center / 100% 1px no-repeat;
}
.slider::-webkit-slider-thumb {
  appearance: none;
  width: 6px;
  height: 6px;
  border-radius: 50%;
  background: #fff;
  box-shadow: 0 0 0 1px rgba(0, 0, 0, 0.18);
}
.opaque {
  grid-column: 2 / 4;
}
.stroke-box select {
  margin: 0 2px;
  background: linear-gradient(#000, #000) center / 100% 2px no-repeat;
}
.text-group {
  display: flex;
  flex-direction: column;
  gap: 2px;
  padding-top: 6px;
}
.row {
  display: flex;
  align-items: center;
  height: 12px;
}
.tag {
  width: 31px;
  margin-right: 3px;
  text-align: right;
}
.text-well {
  width: 38px;
  height: 12px;
  margin-right: 2px;
}
.size {
  width: 27px;
  margin-right: 1px;
}
.style-set {
  display: flex;
  margin-left: 3px;
  gap: 1px;
}
.style-set button {
  width: 10px;
  height: 9px;
  background: #fff;
  border: 1px solid #ddd;
  font-size: 7px;
  line-height: 7px;
}
.style-set .info {
  border: 0;
  background: none;
}
.info span {
  display: block;
  width: 8px;
  height: 8px;
  border-radius: 50%;
  border: 1px solid #a9bbe4;
  background: #ccd8f4;
  color: #5572c0;
  font: italic 6px/6px 'Liberation Serif', serif;
}
.font {
  width: 67px;
  margin-right: 4px;
}
.check.wrap {
  gap: 1px;
  font-size: 5px;
}
.aligns {
  padding-left: 9px;
  gap: 2px;
}
.four {
  width: 55px;
}
.seven {
  width: 104px;
}
.note {
  width: 35px;
  padding-top: 6px;
  margin-left: 2px;
  font-size: 5px;
  line-height: 6px;
}
.caption {
  width: 71px;
  height: 38px;
  margin-top: 7px;
  background: #fff;
  border: 1px solid #dcdcdc;
  resize: none;
}

.body {
  display: flex;
  flex: 1;
  min-height: 0;
}
.palette {
  width: 58px;
  flex: none;
  padding: 1px 1px 0;
}
.palette section {
  margin-bottom: 2px;
}
.palette h2 {
  display: flex;
  height: 8px;
  padding-left: 2px;
  font-size: 5px;
}
.first h2 {
  justify-content: space-between;
  padding-right: 3px;
}
.cells {
  display: grid;
  grid-template-columns: repeat(3, 1fr);
  grid-auto-rows: 1fr;
  gap: 1px;
  height: 16px;
}
.first .cells {
  height: 17px;
}
.other .cells {
  height: 88px;
}
.modify .cells {
  height: 141px;
}
.cell {
  display: block;
  min-height: 0;
  background: #fdfdfd;
  border: 1px solid #cfcfcf;
}
.cell svg {
  display: block;
  width: 100%;
  height: 100%;
}
.cell.on {
  background: #c8c8c8;
}
.cell.off {
  background: #f0f0f0;
  border-color: #dcdcdc;
}
.cell.wide {
  border: 0;
  background: none;
}
.stage {
  flex: 1;
  min-width: 0;
  display: flex;
  flex-direction: column;
  margin-right: 4px;
}
.tabs {
  display: flex;
  height: 14px;
  flex: none;
  border: 1px solid #cfcfcf;
  border-width: 1px 0;
}
.tabs button {
  width: 52px;
  color: #777;
  background: #ebebeb;
  border-right: 1px solid #cfcfcf;
}
.tabs .active {
  margin-top: -1px;
  border-top: 1px solid #1f7fd6;
  background: #fff;
  color: #111;
}
.tabs .nav {
  width: 9px;
  background: #fff;
  border-left: 1px solid #cfcfcf;
  border-right: 0;
}
.tabs .act {
  width: 15px;
  border-left: 1px solid #cfcfcf;
  border-right: 0;
}
.tabs .add {
  width: 18px;
  border-right: 1px solid #cfcfcf;
}
.tabs svg {
  display: block;
  height: 12px;
  margin: auto;
}
.tabs path {
  fill: none;
  stroke: #333;
}
.viewport {
  flex: 1;
  min-height: 0;
  overflow: hidden;
  background: #f4f4f4;
}
.drawing {
  display: block;
}
.ruler text {
  font: 500 5px Inter, sans-serif;
  fill: #444;
}
.wires path {
  fill: none;
  stroke: #333;
  stroke-width: 0.9;
}
.wires .head {
  fill: #222;
}
.parts > * {
  stroke: #2b3b34;
  stroke-width: 0.8;
}
.labels text {
  font: 7px 'Liberation Sans', sans-serif;
  fill: #111;
  stroke: #111;
  stroke-width: 0.1;
}
.labels .mid {
  text-anchor: middle;
}
.labels .big text {
  font-size: 9px;
  text-anchor: middle;
}

footer {
  flex: none;
}
.bottom-tools {
  display: flex;
  align-items: center;
  gap: 1px;
  height: 17px;
  padding: 1px 4px 0 2px;
}
.set {
  display: flex;
  gap: 1px;
}
.set:nth-child(4),
.set:nth-child(5) {
  margin-left: 1px;
}
.tool {
  width: 14px;
  height: 14px;
  background: #f6f6f6;
  border: 1px solid #d6d6d6;
}
.tool svg {
  display: block;
  width: 100%;
  height: 100%;
}
.tool.on {
  background: #cbcbcb;
}
.tool.off,
.tool.wide {
  background: #efefef;
  border-color: #e0e0e0;
}
.tool.wide {
  width: 18px;
}
.tool.shadow {
  width: 32px;
  font-size: 5px;
}
.coords {
  margin-left: auto;
}
.help {
  width: 10px;
  height: 10px;
  margin-left: 1px;
  border-radius: 50%;
  background: #fff;
  box-shadow: 0 0 1px #888;
  font-size: 7px;
}
.status {
  display: flex;
  align-items: center;
  gap: 3px;
  height: 12px;
  padding: 0 4px 0 6px;
}
.hint {
  flex: 1;
  white-space: nowrap;
  font-weight: 400;
  color: #111;
}
.zoom {
  width: 27px;
}
.zoom select {
  padding-left: 2px;
  font-size: 5px;
}
.zoomer {
  width: 44px;
  background: linear-gradient(90deg, #2c7cf2 14%, #b5b5b5 14%) center / 100% 1px no-repeat;
}

.prefs {
  top: 136px;
  right: 12px;
  left: 611px;
  padding-bottom: 10px;
  border-radius: 4px;
  box-shadow: 0 8px 18px rgba(0, 0, 0, 0.55), 0 0 0 1px rgba(0, 0, 0, 0.18);
}
.prefs .titlebar {
  height: 12px;
}
.prefs .titlebar h1 {
  font-size: 7px;
}
.pref-tabs {
  position: relative;
  display: flex;
  align-self: center;
  margin: 6px 0 -6px;
  height: 11px;
  border-radius: 2px;
  overflow: hidden;
  box-shadow: 0 0 0 1px rgba(0, 0, 0, 0.1);
}
.pref-tabs button {
  padding: 0 6px;
  background: #fff;
  font-size: 7px;
  line-height: 11px;
  border-right: 1px solid #e2e2e2;
}
.pref-tabs .on {
  background: linear-gradient(#5ba3fa, #1667f5);
  color: #fff;
}
.panel {
  margin: 0 10px;
  padding: 10px 6px 47px;
  background: #e2e2e2;
  border-radius: 2px;
}
.panel .check {
  height: 11px;
}
.panel .show {
  margin-left: 3px;
}
.grid-color {
  width: 65px;
  height: 12px;
  margin: 2px 0 3px 64px;
  background: #e9e9e9;
}
.panel .indent {
  margin-left: 64px;
}
hr {
  margin: 2px 0;
  border: 0;
  height: 1px;
  background: #d2d2d2;
}
.form {
  display: grid;
  align-items: center;
  white-space: nowrap;
}
.spacing {
  grid-template-columns: 53px 65px 65px;
  grid-template-rows: 12px;
  grid-auto-rows: 13px;
  column-gap: 11px;
  margin-top: 3px;
}
.spacing > :nth-child(3n + 1) {
  justify-self: end;
  margin-right: -7px;
}
.field {
  display: flex;
  height: 10px;
  background: #fff;
  border: 1px solid #d4d4d4;
}
.field input {
  flex: 1;
  min-width: 0;
  padding-left: 2px;
}
.field.focus {
  border-color: #5f9cf0;
  box-shadow: 0 0 0 1px #86b4f3;
}
.field.focus input {
  background: linear-gradient(#b3d4fc, #b3d4fc) 1px 0 / 4px 100% no-repeat;
}
.snap {
  margin-top: 3px;
  grid-template-columns: 60px 65px 1fr;
  grid-template-rows: 13px 11px 11px;
  column-gap: 4px;
}
.snap .lead {
  justify-self: end;
}
.snap .wide {
  grid-column: 2 / 4;
}
.actions {
  display: flex;
  gap: 5px;
  padding: 12px 11px 0 10px;
}
.actions button {
  height: 11px;
  background: #fff;
  border-radius: 2px;
  box-shadow: 0 1px 1px rgba(0, 0, 0, 0.2), 0 0 0 1px rgba(0, 0, 0, 0.06);
  font-size: 7px;
}
.restore {
  width: 135px;
}
.cancel {
  width: 45px;
}
.actions .ok {
  width: 48px;
  background: linear-gradient(#5ba3fa, #1667f5);
  color: #fff;
}
</style>
